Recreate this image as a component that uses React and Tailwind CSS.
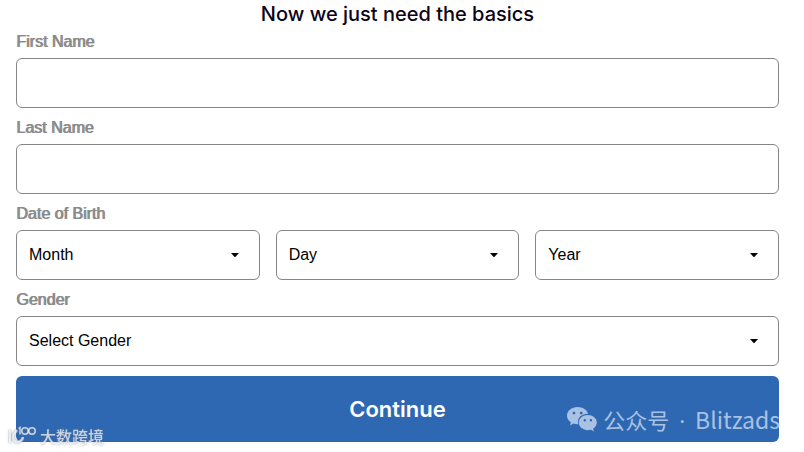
const months = ['January', 'February', 'March', 'April', 'May', 'June', 'July', 'August', 'September', 'October', 'November', 'December']
const days = Array.from({ length: 31 }, (_, i) => i + 1)
const years = Array.from({ length: 90 }, (_, i) => 2006 - i)
const genders = ['Male', 'Female']

const labelClass = 'block text-base leading-6 text-[#8a8a8a] [text-shadow:1px_0_0_#8a8a8a]'
const fieldClass = 'block w-full h-[50px] rounded-md border border-[#868688] bg-white px-3 text-base text-black'

const TextField = ({ id, label }) => (
  <div>
    <label htmlFor={id} className={labelClass}>{label}</label>
    <input id={id} type="text" className={`${fieldClass} mt-1`} />
  </div>
)

const Select = ({ id, placeholder, options, ...props }) => (
  <div className="relative">
    <select id={id} defaultValue="" className={`${fieldClass} appearance-none`} {...props}>
      <option value="">{placeholder}</option>
      {options.map((option) => (
        <option key={option} value={option}>{option}</option>
      ))}
    </select>
    <svg viewBox="0 0 8 4" className="pointer-events-none absolute right-[21px] top-[23px] h-1 w-2" aria-hidden="true">
      <path d="M0 0h8L4.600 3.700q-.6.500-1.200 0z" />
    </svg>
  </div>
)

const WeChatIcon = () => (
  <svg viewBox="0 0 30 25" className="h-[25px] w-[30px]" fill="currentColor" aria-hidden="true">
    <path
      fillRule="evenodd"
      d="M10.500 0C4.700 0 0 3.900 0 8.700c0 2.700 1.500 5.100 3.900 6.700l-1 3.100 3.600-1.900c1.300.4 2.600.6 4 .6h.8a8 8 0 0 1-.4-2.300c0-4.600 4.300-8.200 9.600-8.200h.6C20 2.800 15.700 0 10.500 0zM7 4.700a1.400 1.400 0 1 1 0 2.800 1.400 1.400 0 0 1 0-2.800zm7.200 0a1.400 1.400 0 1 1 0 2.800 1.400 1.400 0 0 1 0-2.800z"
    />
    <path
      fillRule="evenodd"
      d="M20.800 8c-5 0-9 3.300-9 7.600s4 7.600 9 7.600c1.100 0 2.200-.2 3.200-.5l2.900 1.700-.8-2.700c2.200-1.400 3.700-3.600 3.700-6.100 0-4.300-4-7.600-9-7.600zm-3 4a1.200 1.200 0 1 1 0 2.400 1.200 1.200 0 0 1 0-2.400zm6.100 0a1.200 1.200 0 1 1 0 2.400 1.200 1.200 0 0 1 0-2.400z"
    />
  </svg>
)

const PlatformLogo = () => (
  <svg viewBox="0 0 28 20" className="h-5 w-7" fill="none" stroke="currentColor" aria-hidden="true">
    <path strokeWidth="2" d="M1 5h1v12" />
    <path strokeWidth="2.500" d="M9 4L5 9.500M5 9.500C5 14 7 16.500 10 16c3-.5 4.500-2.500 5-5" />
    <path strokeWidth="1.500" d="M10.500 2.500l1.500-1v7" />
    <circle cx="17" cy="5" r="3.200" strokeWidth="1.500" />
    <circle cx="24" cy="5" r="3.200" strokeWidth="1.500" />
  </svg>
)

const App = () => {
  return (
    <main className="relative pl-4 pr-[25px] pb-2.5 bg-white font-['Liberation_Sans',Arial,sans-serif]">
      <h1 className="mb-0.5 text-center font-['Inter',sans-serif] text-xl leading-7 font-medium text-[#0d0418]">
        Now we just need the basics
      </h1>

      <form className="flex flex-col" onSubmit={(e) => e.preventDefault()}>
        <div className="flex flex-col gap-2">
          <TextField id="first-name" label="First Name" />
          <TextField id="last-name" label="Last Name" />

          <div>
            <label htmlFor="birth-month" className={labelClass}>Date of Birth</label>
            <div className="mt-1 grid grid-cols-3 gap-4">
              <Select id="birth-month" placeholder="Month" options={months} />
              <Select id="birth-day" placeholder="Day" options={days} aria-label="Day of birth" />
              <Select id="birth-year" placeholder="Year" options={years} aria-label="Year of birth" />
            </div>
          </div>

          <div>
            <label htmlFor="gender" className={`${labelClass} mb-1`}>Gender</label>
            <Select id="gender" placeholder="Select Gender" options={genders} />
          </div>
        </div>

        <button
          type="submit"
          className="mt-2.5 h-[66px] w-full rounded-md bg-[#2e68b2] font-['Inter',sans-serif] text-[22px] font-semibold text-white"
        >
          Continue
        </button>
      </form>

      <div className="pointer-events-none absolute bottom-1 left-2 flex items-center gap-1 text-white/70 drop-shadow-[0_0_1px_#64748b] font-['Noto_Sans_CJK_SC',sans-serif]">
        <PlatformLogo />
        <span className="text-base leading-6 font-medium">大数跨境</span>
      </div>

      <div className="pointer-events-none absolute bottom-4 right-6 flex items-center gap-1.5 text-[#a9c1e2] font-['Noto_Sans_CJK_SC',sans-serif]">
        <WeChatIcon />
        <span className="flex items-baseline gap-2.5 text-[22px] leading-8">
          <span>公众号</span>
          <span className="font-['Noto_Sans',sans-serif]">·</span>
          <span className="text-[23px]">Blitzads</span>
        </span>
      </div>
    </main>
  )
}

export default App
